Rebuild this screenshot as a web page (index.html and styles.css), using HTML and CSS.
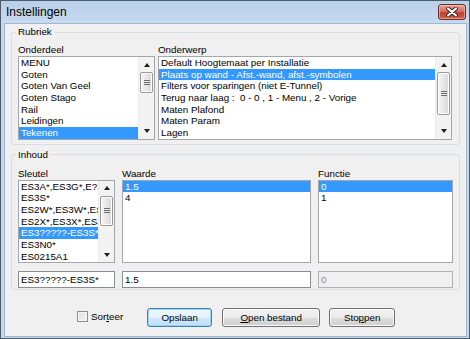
FILE: index.html
```html
<!DOCTYPE html>
<html>
<head>
<meta charset="utf-8">
<link rel="stylesheet" href="styles.css">
</head>
<body>
<div class="window">
  <div class="titlebar">
    <span class="title">Instellingen</span>
    <div class="close">
      <svg width="12" height="10" viewBox="0 0 12 10"><path d="M2 1.5 L10 8.5 M10 1.5 L2 8.5" stroke="#3a1a1a" stroke-width="4" stroke-linecap="round"/><path d="M2 1.5 L10 8.5 M10 1.5 L2 8.5" stroke="#ffffff" stroke-width="2.2" stroke-linecap="round"/></svg>
    </div>
  </div>
  <div class="frame">
    <div class="client">
      <fieldset class="group rubriek">
        <legend>Rubriek</legend>
        <div class="rub-cols">
          <div class="col">
            <div class="lbl">Onderdeel</div>
            <div class="listbox">
              <div class="items">
                <div class="item">MENU</div>
                <div class="item">Goten</div>
                <div class="item">Goten Van Geel</div>
                <div class="item">Goten Stago</div>
                <div class="item">Rail</div>
                <div class="item">Leidingen</div>
                <div class="item sel">Tekenen</div>
              </div>
              <div class="sb">
                <div class="sb-btn"><span class="arr up"></span></div>
                <div class="thumb t-onderdeel"><span class="grip"></span></div>
                <div class="sb-fill"></div>
                <div class="sb-btn"><span class="arr down"></span></div>
              </div>
            </div>
          </div>
          <div class="col">
            <div class="lbl">Onderwerp</div>
            <div class="listbox">
              <div class="items">
                <div class="item">Default Hoogtemaat per Installatie</div>
                <div class="item sel">Plaats op wand - Afst.-wand, afst.-symbolen</div>
                <div class="item">Filters voor sparingen (niet E-Tunnel)</div>
                <div class="item">Terug naar laag :&nbsp; 0 - 0 , 1 - Menu , 2 - Vorige</div>
                <div class="item">Maten Plafond</div>
                <div class="item">Maten Param</div>
                <div class="item">Lagen</div>
              </div>
              <div class="sb">
                <div class="sb-btn"><span class="arr up"></span></div>
                <div class="thumb t-onderwerp"><span class="grip"></span></div>
                <div class="sb-fill"></div>
                <div class="sb-btn"><span class="arr down"></span></div>
              </div>
            </div>
          </div>
        </div>
      </fieldset>

      <fieldset class="group inhoud">
        <legend>Inhoud</legend>
        <div class="inh-grid">
          <div class="lbl">Sleutel</div>
          <div class="lbl">Waarde</div>
          <div class="lbl">Functie</div>
          <div class="listbox">
            <div class="items">
              <div class="item">ES3A*,ES3G*,E?3G*</div>
              <div class="item">ES3S*</div>
              <div class="item">ES2W*,ES3W*,ES4W*</div>
              <div class="item">ES2X*,ES3X*,ES4X*</div>
              <div class="item sel">ES3?????-ES3S*</div>
              <div class="item">ES3N0*</div>
              <div class="item">ES0215A1</div>
            </div>
            <div class="sb">
              <div class="sb-btn"><span class="arr up"></span></div>
              <div class="thumb t-sleutel"><span class="grip"></span></div>
              <div class="sb-fill"></div>
              <div class="sb-btn"><span class="arr down"></span></div>
            </div>
          </div>
          <div class="listbox">
            <div class="items">
              <div class="item sel">1.5</div>
              <div class="item">4</div>
            </div>
          </div>
          <div class="listbox">
            <div class="items">
              <div class="item sel">0</div>
              <div class="item">1</div>
            </div>
          </div>
          <div class="input">ES3?????-ES3S*</div>
          <div class="input">1.5</div>
          <div class="input disabled">0</div>
        </div>
      </fieldset>

      <div class="buttons">
        <label class="check"><span class="box"></span><span>Sor<u>t</u>eer</span></label>
        <div class="btn default b-opslaan">Opslaan</div>
        <div class="btn b-open"><u>O</u>pen bestand</div>
        <div class="btn b-stop">Sto<u>p</u>pen</div>
      </div>
    </div>
  </div>
</div>
</body>
</html>
```

FILE: styles.css
```css
* { box-sizing: border-box; }
html, body { margin: 0; padding: 0; }
body {
  width: 470px;
  height: 339px;
  overflow: hidden;
  background: #ffffff;
  font-family: "Liberation Sans", Arial, sans-serif;
  font-size: 9.8px;
  color: #000000;
}

.window {
  width: 470px;
  height: 339px;
  border: 1px solid #4e5b68;
  background: #c3d8ee;
  display: flex;
  flex-direction: column;
}

.titlebar {
  height: 22px;
  flex: none;
  display: flex;
  align-items: center;
  padding: 0 3px 0 5px;
  background: linear-gradient(#b8d0e9, #c8dbef);
}
.title { flex: 1; font-size: 12px; color: #000; }
.close {
  width: 28px;
  height: 16px;
  border: 1px solid #6b2d27;
  border-radius: 3px;
  background: linear-gradient(#e6a597 0%, #d5705f 45%, #c0402e 55%, #d0604c 100%);
  box-shadow: inset 0 0 0 1px rgba(255, 210, 200, 0.55);
  display: flex;
  align-items: center;
  justify-content: center;
}

.frame {
  flex: 1;
  padding: 0 2px 1px 3px;
  display: flex;
}
.client {
  flex: 1;
  border: 1px solid #9fb8d2;
  background: #f0f0f0;
}

.group {
  margin: 2px 6px 0 6px;
  border: 1px solid #d5dfe5;
  border-radius: 3px;
  min-width: 0;
}
.group legend {
  padding: 0 2px;
  margin-left: -2px;
  line-height: 12px;
  font-size: 9.8px;
}
.rubriek { padding: 6px 7px 4px 6px; }
.inhoud { margin-top: 4px; padding: 7px 6px 1px 6px; }

.lbl { height: 12px; line-height: 12px; white-space: nowrap; }

.rub-cols { display: flex; gap: 3px; }
.rub-cols .col:first-child { width: 137px; flex: none; }
.rub-cols .col:last-child { flex: 1; min-width: 0; }

.listbox {
  height: 83.7px;
  border: 1px solid #a3a7ad;
  background: #ffffff;
  display: flex;
  overflow: hidden;
}
.items { flex: 1; min-width: 0; overflow: hidden; }
.item {
  height: 11.67px;
  line-height: 11.67px;
  padding-left: 2px;
  white-space: nowrap;
  overflow: hidden;
}
.item.sel { background: #3399ff; color: #ffffff; }

.sb {
  width: 16px;
  flex: none;
  display: flex;
  flex-direction: column;
  background: #f3f3f3;
  border-left: 1px solid #ececec;
}
.sb-btn {
  height: 15px;
  flex: none;
  display: flex;
  align-items: center;
  justify-content: center;
}
.arr { width: 0; height: 0; border-left: 3.5px solid transparent; border-right: 3.5px solid transparent; }
.arr.up { border-bottom: 4px solid #202020; }
.arr.down { border-top: 4px solid #202020; }
.sb-fill { flex: 1; }
.thumb {
  flex: none;
  margin: 0 1px;
  border: 1px solid #9a9a9a;
  border-radius: 2px;
  background: linear-gradient(to right, #f6f6f6, #e6e6e6 50%, #d9d9d9);
  box-shadow: inset 0 0 0 1px #ffffff;
  display: flex;
  align-items: center;
  justify-content: center;
}
.t-onderdeel { height: 21px; }
.t-onderwerp { height: 43px; }
.t-sleutel { height: 30px; }
.grip {
  width: 6px;
  height: 5px;
  background: repeating-linear-gradient(#6f6f6f 0 1px, transparent 1px 2px);
}

.inh-grid {
  display: grid;
  grid-template-columns: 97px 189px 1fr;
  column-gap: 7px;
}
.inh-grid .input:first-of-type { }
.input {
  margin-top: 8px;
  height: 17px;
  line-height: 15px;
  padding-left: 2px;
  border: 1px solid #8a8d91;
  background: #ffffff;
  white-space: nowrap;
  overflow: hidden;
}
.input.disabled {
  background: #f0f0f0;
  border-color: #adb2b5;
  color: #8d8d8d;
}

.buttons {
  display: flex;
  align-items: center;
  margin-top: 18px;
  padding-left: 72px;
}
.check {
  display: flex;
  align-items: center;
  gap: 3px;
  margin-right: 24px;
  margin-bottom: 2px;
}
.box {
  width: 11px;
  height: 11px;
  border: 1px solid #8f8f8f;
  background: linear-gradient(135deg, #dcdcdc, #f6f6f6);
  box-shadow: inset 0 0 0 1px #f4f4f4;
}
.btn {
  height: 19px;
  border: 1px solid #707070;
  border-radius: 3px;
  background: linear-gradient(#f2f2f2 0%, #ebebeb 50%, #dddddd 51%, #cfcfcf 100%);
  box-shadow: inset 0 0 0 1px #fbfbfb;
  display: flex;
  align-items: center;
  justify-content: center;
  white-space: nowrap;
}
.btn.default {
  border-color: #3c7fb1;
  background: linear-gradient(#eef7fd 0%, #e2f1fb 50%, #cfe7f8 51%, #bfdff5 100%);
  box-shadow: inset 0 0 0 1px #9fd5f7;
}
.b-opslaan { width: 65px; margin-right: 10px; }
.b-open { width: 98px; margin-right: 9px; }
.b-stop { width: 66px; }
```
